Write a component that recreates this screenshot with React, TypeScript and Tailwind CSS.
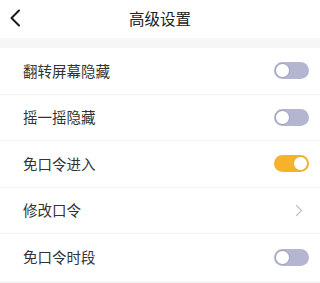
import React from 'react';

type Row = { label: string; kind: 'toggle' | 'link'; on?: boolean };

const rows: Row[] = [
  { label: '翻转屏幕隐藏', kind: 'toggle', on: false },
  { label: '摇一摇隐藏', kind: 'toggle', on: false },
  { label: '免口令进入', kind: 'toggle', on: true },
  { label: '修改口令', kind: 'link' },
  { label: '免口令时段', kind: 'toggle', on: false },
];

function Toggle({ on }: { on?: boolean }) {
  return (
    <div
      className={
        on
          ? 'relative w-[35px] h-[17px] rounded-full bg-[#f6b22b]'
          : 'relative w-[35px] h-[17px] rounded-full bg-[#b3b5d1]'
      }
    >
      <div
        className={
          on
            ? 'absolute top-[1px] right-[1px] w-[15px] h-[15px] rounded-full bg-white border border-[#f0a820]'
            : 'absolute top-[1px] left-[1px] w-[15px] h-[15px] rounded-full bg-white border border-[#9a9cb8]'
        }
      />
    </div>
  );
}

export default function App() {
  return (
    <div className="w-[320px] h-[283px] bg-[#f6f6f6] flex flex-col font-['Noto_Sans_CJK_SC',sans-serif] overflow-hidden">
      <div className="h-[38px] bg-white relative flex items-center justify-center">
        <svg className="absolute left-[9px] top-[9px]" width="12" height="18" viewBox="0 0 12 18">
          <path d="M10 1.5 L2.5 9 L10 16.5" fill="none" stroke="#1a1a1a" strokeWidth="2" strokeLinecap="round" strokeLinejoin="round" />
        </svg>
        <span className="text-[15.5px] text-[#222] leading-none">高级设置</span>
      </div>
      <div className="h-[10px]" />
      <div className="bg-white flex flex-col">
        {rows.map((r, i) => (
          <div
            key={r.label}
            className={
              i < rows.length - 1
                ? 'h-[46.5px] flex items-center justify-between pl-[23px] pr-[11px] border-b border-[#f3f3f3]'
                : 'h-[46.5px] flex items-center justify-between pl-[23px] pr-[11px]'
            }
          >
            <span className="text-[14.5px] text-[#333] leading-none">{r.label}</span>
            {r.kind === 'toggle' ? (
              <Toggle on={r.on} />
            ) : (
              <svg className="mr-[6px]" width="8" height="13" viewBox="0 0 8 13">
                <path d="M1.5 1.5 L6.5 6.5 L1.5 11.5" fill="none" stroke="#c4c4c4" strokeWidth="1.3" strokeLinecap="round" strokeLinejoin="round" />
              </svg>
            )}
          </div>
        ))}
      </div>
    </div>
  );
}
